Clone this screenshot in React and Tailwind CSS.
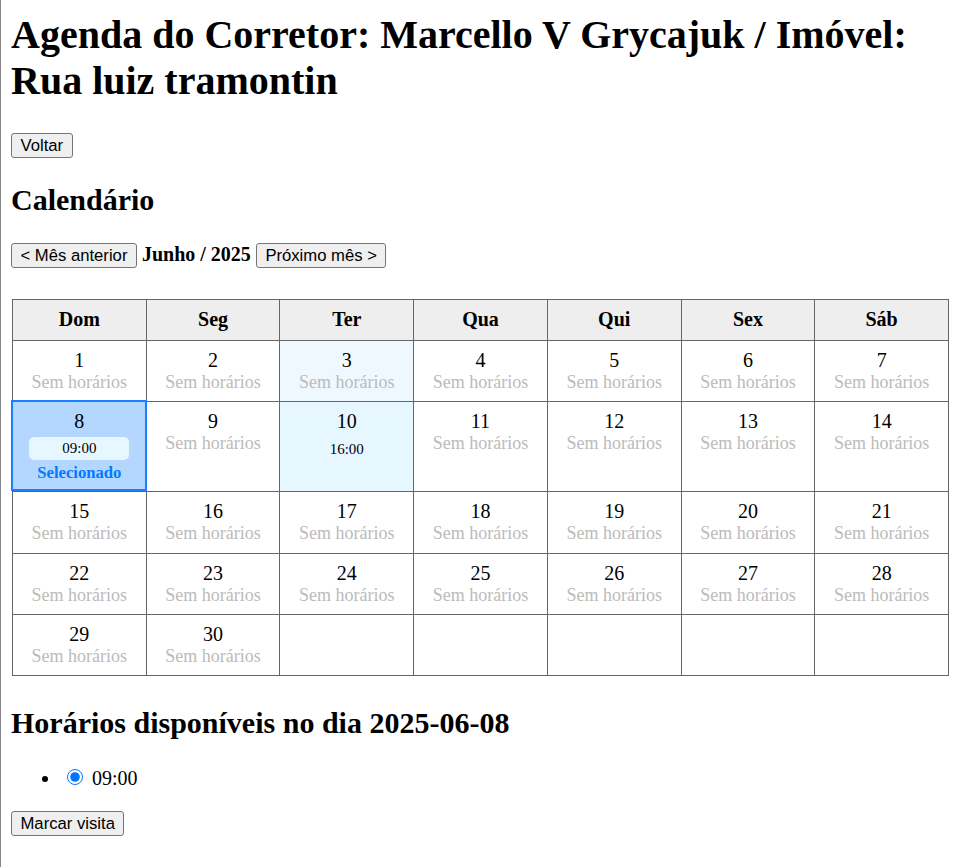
import React from "react";

const serif = "font-['Liberation_Serif','Times_New_Roman',serif]";
const sans = "font-['Liberation_Sans',Arial,sans-serif]";

function Btn({ children }) {
  return (
    <button
      className={`h-[25px] px-[8.5px] border border-[#767676] bg-[#efefef] rounded-[3px] text-[16.67px] leading-[19px] text-black ${sans}`}
    >
      {children}
    </button>
  );
}

const days = ["Dom", "Seg", "Ter", "Qua", "Qui", "Sex", "Sáb"];

function DayCell({ d, h }) {
  if (!d) {
    return <div className={`${h} border-r border-b border-[#666]`} />;
  }
  if (d === 8) {
    return (
      <div className={`${h} relative border-r border-b border-[#666] bg-[#b3d7ff] pt-[8px] flex flex-col items-center text-center`}>
        <div className="text-[20px] leading-[23px]">8</div>
        <div className="mt-[4px] w-[100px] rounded-[5px] bg-[#e6f7ff] py-[3px] text-center text-[15px] leading-[17.25px]">09:00</div>
        <div className="mt-[2.5px] text-[16.67px] leading-[19px] font-bold text-[#007bff]">Selecionado</div>
        <span className="absolute left-[-2px] top-[-2px] right-[-1px] bottom-0 border-2 border-[#1a7fff]" />
      </div>
    );
  }
  if (d === 10) {
    return (
      <div className={`${h} border-r border-b border-[#666] bg-[#e6f7ff] pt-[8px] flex flex-col items-center text-center`}>
        <div className="text-[20px] leading-[23px]">10</div>
        <div className="mt-[5px] w-[100px] rounded-[5px] py-[3px] text-center text-[15px] leading-[17.25px]">16:00</div>
      </div>
    );
  }
  return (
    <div
      className={`${h} border-r border-b border-[#666] pt-[8px] flex flex-col items-center text-center ${d === 3 ? "bg-[#f0f8ff]" : ""}`}
    >
      <div className="text-[20px] leading-[23px]">{d}</div>
      <div className="text-[18px] leading-[20.7px] text-[#bbb]">Sem horários</div>
    </div>
  );
}

export default function App() {
  const rows = [];
  for (let r = 0; r < 5; r++) {
    const row = [];
    for (let c = 0; c < 7; c++) {
      const n = r * 7 + c + 1;
      row.push(n <= 30 ? n : null);
    }
    rows.push(row);
  }
  return (
    <div className={`min-h-screen border-l border-[#888] pl-[10px] pr-[8px] pb-[10px] bg-white text-black ${serif}`}>
      <div className="h-[11.5px]" />
      <h1 className="text-[40px] leading-[46px] font-bold">
        Agenda do Corretor: Marcello V Grycajuk / Imóvel: Rua luiz tramontin
      </h1>
      <div className="mt-[29.8px] flex">
        <Btn>Voltar</Btn>
      </div>
      <h2 className="mt-[24.4px] text-[30px] leading-[34.5px] font-bold">Calendário</h2>
      <div className="mt-[26px] flex items-baseline gap-[5px] text-[20px] leading-[23px]">
        <Btn>&lt; Mês anterior</Btn>
        <b className="font-bold">Junho / 2025</b>
        <Btn>Próximo mês &gt;</Btn>
      </div>
      <div className="mt-[30.7px] ml-[1px] grid grid-cols-7 border-t border-l border-[#666]">
        {days.map((d) => (
          <div
            key={d}
            className="h-[41px] border-r border-b border-[#666] bg-[#eee] flex items-center justify-center text-[20px] leading-[23px] font-bold"
          >
            {d}
          </div>
        ))}
        {rows.map((row, ri) =>
          row.map((d, ci) => (
            <DayCell key={`${ri}-${ci}`} d={d} h={ri === 1 ? "h-[90px]" : "h-[61.33px]"} />
          ))
        )}
      </div>
      <h2 className="mt-[29.7px] text-[30px] leading-[34.5px] font-bold">
        Horários disponíveis no dia 2025-06-08
      </h2>
      <ul className="mt-[24.5px] pl-[50px] list-disc text-[20px] leading-[23px]">
        <li>
          <input
            type="radio"
            checked
            readOnly
            className="w-[16px] h-[16px] ml-[6.25px] mr-[3.75px] mt-[3.75px] accent-[#0075ff] align-baseline"
          />{" "}
          09:00
        </li>
      </ul>
      <div className="mt-[21px] flex">
        <Btn>Marcar visita</Btn>
      </div>
    </div>
  );
}
